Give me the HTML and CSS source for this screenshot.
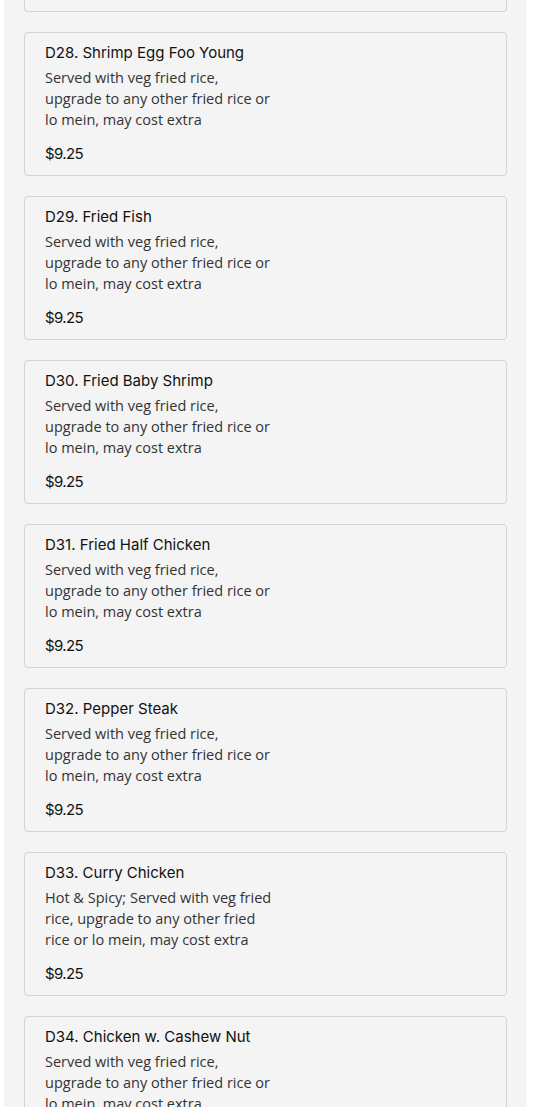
FILE: index.html
```html
<!DOCTYPE html>
<html>
<head>
<meta charset="utf-8">
<link rel="stylesheet" href="styles.css">
</head>
<body>
<div class="menu">
  <div class="card-tail"></div>
  <div class="card">
    <div class="title">D28. Shrimp Egg Foo Young</div>
    <div class="desc">Served with veg fried rice, upgrade to any other fried rice or lo mein, may cost extra</div>
    <div class="price">$9.25</div>
  </div>
  <div class="card">
    <div class="title">D29. Fried Fish</div>
    <div class="desc">Served with veg fried rice, upgrade to any other fried rice or lo mein, may cost extra</div>
    <div class="price">$9.25</div>
  </div>
  <div class="card">
    <div class="title">D30. Fried Baby Shrimp</div>
    <div class="desc">Served with veg fried rice, upgrade to any other fried rice or lo mein, may cost extra</div>
    <div class="price">$9.25</div>
  </div>
  <div class="card">
    <div class="title">D31. Fried Half Chicken</div>
    <div class="desc">Served with veg fried rice, upgrade to any other fried rice or lo mein, may cost extra</div>
    <div class="price">$9.25</div>
  </div>
  <div class="card">
    <div class="title">D32. Pepper Steak</div>
    <div class="desc">Served with veg fried rice, upgrade to any other fried rice or lo mein, may cost extra</div>
    <div class="price">$9.25</div>
  </div>
  <div class="card">
    <div class="title">D33. Curry Chicken</div>
    <div class="desc">Hot &amp; Spicy; Served with veg fried rice, upgrade to any other fried rice or lo mein, may cost extra</div>
    <div class="price">$9.25</div>
  </div>
  <div class="card">
    <div class="title">D34. Chicken w. Cashew Nut</div>
    <div class="desc">Served with veg fried rice, upgrade to any other fried rice or lo mein, may cost extra</div>
    <div class="price">$9.25</div>
  </div>
</div>
</body>
</html>
```
FILE: styles.css
```css
html, body {
  margin: 0;
  padding: 0;
  background: #ffffff;
}
.menu {
  margin: 0 0 0 4px;
  width: 523px;
  box-sizing: border-box;
  padding: 0 20px 20px;
  background: #f4f4f4;
  display: flex;
  flex-direction: column;
  gap: 20px;
}
.card-tail {
  height: 11px;
  border: 1px solid #d4d4d4;
  border-top: none;
  border-radius: 0 0 4px 4px;
}
.card {
  border: 1px solid #d4d4d4;
  border-radius: 4px;
  padding: 10px 20px 11px;
  background: #f4f4f4;
  color: #222;
}
.title {
  font-family: Inter, "Liberation Sans", sans-serif;
  font-size: 15px;
  font-weight: 400;
  line-height: 20px;
  margin-bottom: 4px;
  color: #111;
}
.desc {
  font-family: "Open Sans", sans-serif;
  font-size: 14.5px;
  line-height: 21px;
  width: 229px;
  color: #333;
  margin-bottom: 14px;
}
.price {
  font-family: Inter, "Liberation Sans", sans-serif;
  font-size: 15px;
  font-weight: 400;
  line-height: 20px;
  color: #111;
  letter-spacing: -0.6px;
}
```
